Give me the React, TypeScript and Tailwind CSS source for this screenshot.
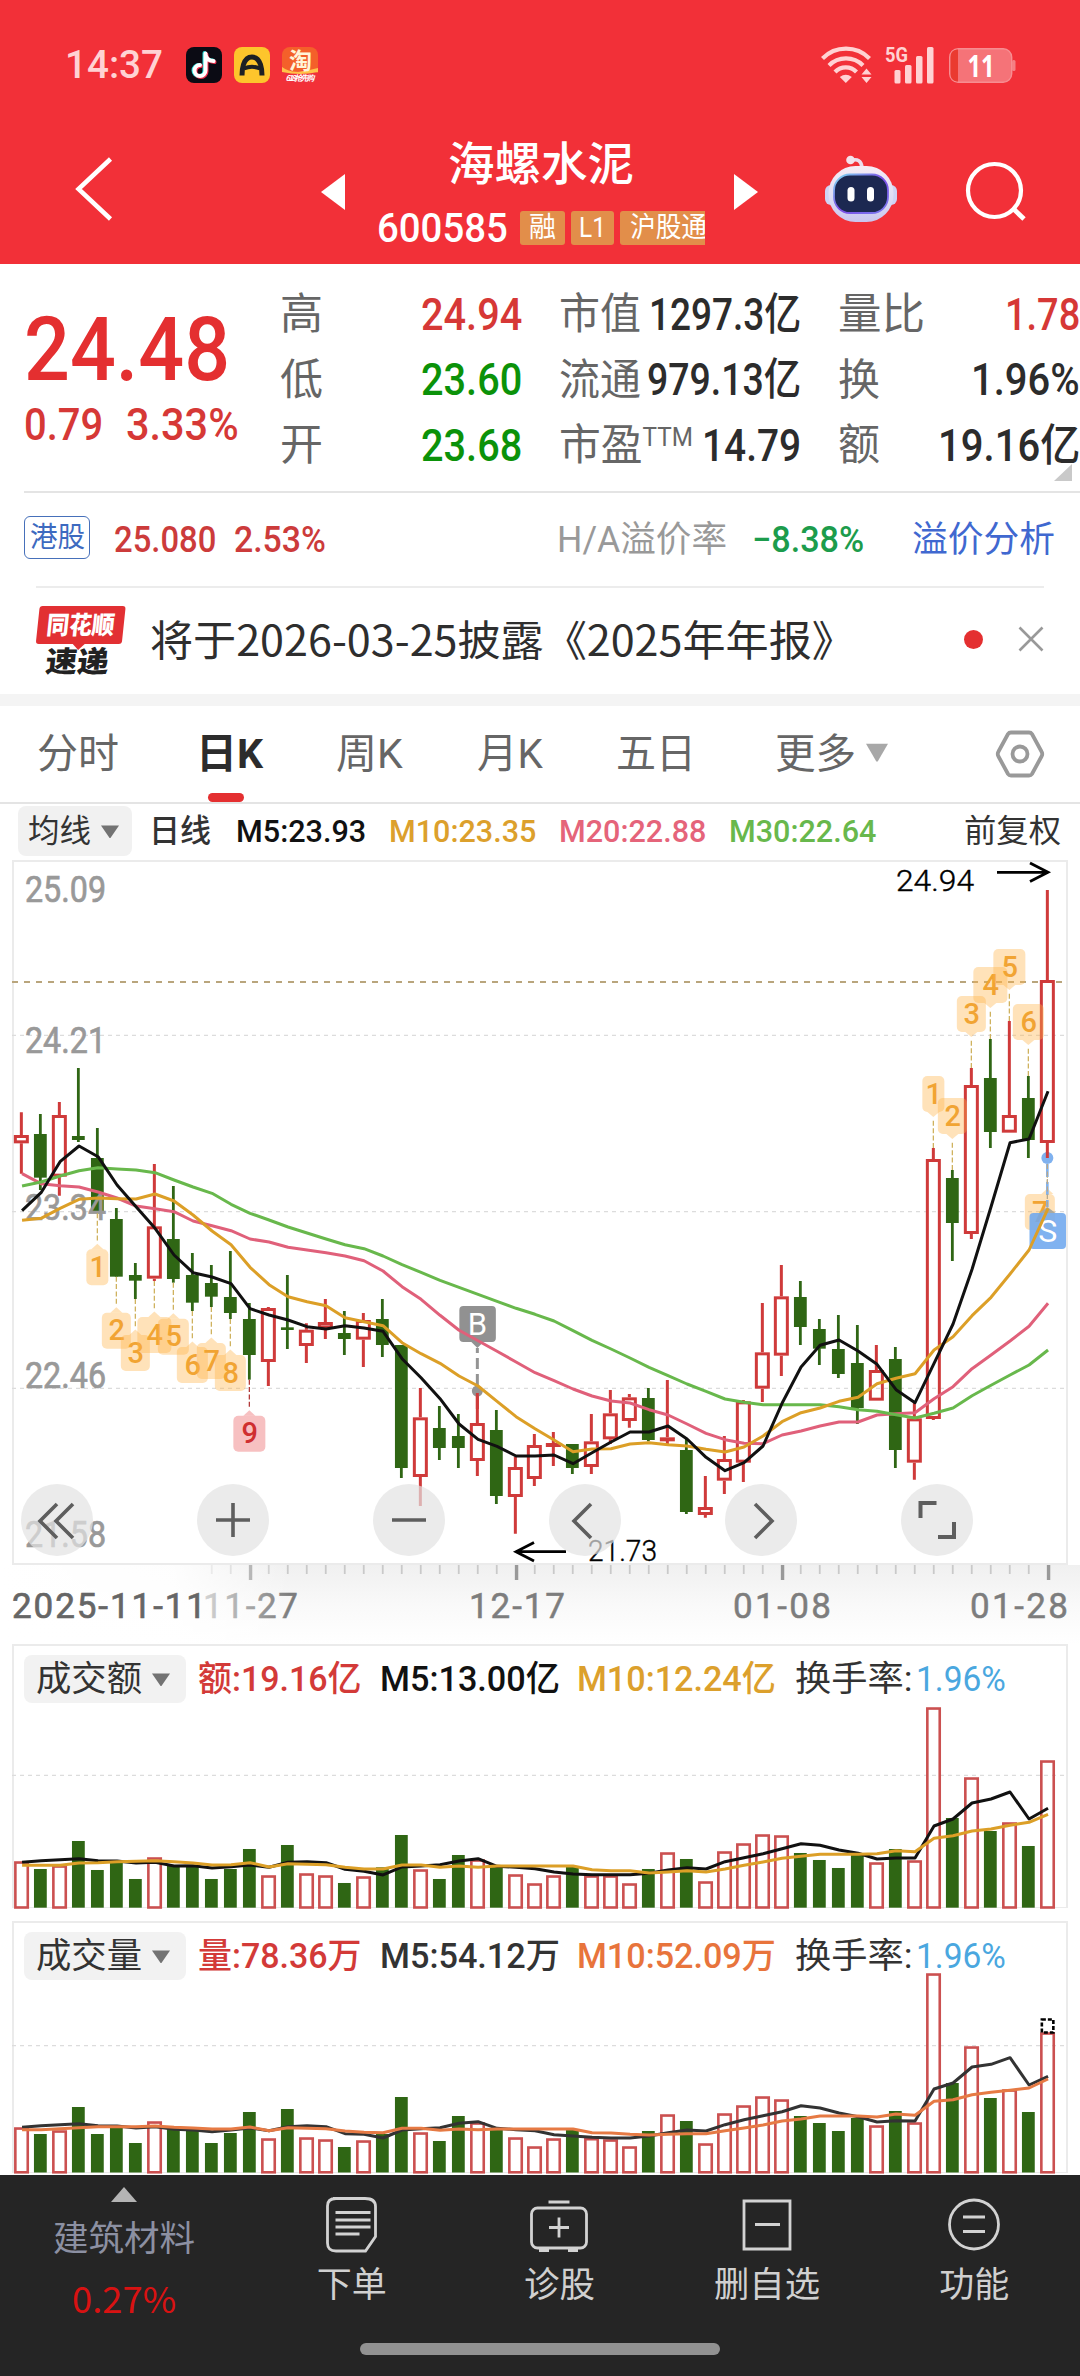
import { useLayoutEffect, useRef, useState, type ReactNode } from "react";

/** Single-line text condensed or widened horizontally to fill the width of its box. */
function Fit({ className, children }: { className: string; children: ReactNode }) {
  const box = useRef<HTMLDivElement>(null);
  const text = useRef<HTMLSpanElement>(null);
  const [scale, setScale] = useState(1);
  useLayoutEffect(() => {
    if (box.current && text.current) {
      setScale(box.current.clientWidth / text.current.offsetWidth);
    }
  }, [children]);
  return (
    <div ref={box} className={`flex shrink-0 leading-none whitespace-nowrap ${className}`}>
      <span ref={text} className="inline-block shrink-0 origin-left" style={{ transform: `scaleX(${scale})` }}>
        {children}
      </span>
    </div>
  );
}

const RED = "#cf3a3a";
const GREEN = "#2f6614";
const STEP = 19;
const X0 = 9.35;

/** Candles as [rising, high, body top, body bottom, low], three units to a pixel from the panel's top. */
const CANDLES: [number, number, number, number, number][] = [
  [1, 757, 825, 850, 941], [0, 762, 822, 953, 990], [1, 726, 765, 950, 1007], [0, 624, 828, 840, 846],
  [0, 804, 894, 1055, 1060], [0, 1044, 1077, 1250, 1250], [0, 1209, 1245, 1262, 1317], [1, 912, 1099, 1256, 1263],
  [0, 978, 1137, 1257, 1268], [0, 1179, 1245, 1328, 1353], [0, 1215, 1269, 1310, 1341], [0, 1173, 1311, 1359, 1377],
  [0, 1329, 1377, 1485, 1559], [1, 1341, 1344, 1506, 1578], [0, 1245, 1402, 1410, 1467], [1, 1390, 1409, 1458, 1509],
  [1, 1317, 1386, 1405, 1437], [0, 1353, 1419, 1437, 1485], [1, 1359, 1380, 1439, 1521], [0, 1317, 1377, 1455, 1491],
  [0, 1455, 1455, 1824, 1854], [1, 1584, 1672, 1851, 1938], [0, 1638, 1704, 1764, 1800], [0, 1662, 1728, 1764, 1824],
  [1, 1596, 1689, 1803, 1848], [0, 1650, 1710, 1908, 1932], [1, 1790, 1821, 1911, 2021], [1, 1722, 1755, 1857, 1878],
  [1, 1716, 1749, 1761, 1818], [0, 1752, 1752, 1824, 1842], [1, 1662, 1744, 1821, 1842], [1, 1590, 1660, 1738, 1752],
  [1, 1602, 1612, 1683, 1703], [0, 1584, 1614, 1740, 1744], [1, 1560, 1732, 1743, 1752], [0, 1737, 1770, 1956, 1962],
  [1, 1848, 1941, 1965, 1973], [1, 1728, 1797, 1862, 1902], [1, 1620, 1624, 1808, 1866], [1, 1329, 1477, 1586, 1626],
  [1, 1215, 1309, 1487, 1548], [0, 1263, 1311, 1401, 1455], [0, 1377, 1407, 1466, 1515], [0, 1365, 1467, 1542, 1554],
  [0, 1395, 1509, 1644, 1692], [1, 1455, 1530, 1622, 1622], [0, 1461, 1497, 1770, 1824], [1, 1624, 1675, 1808, 1859],
  [1, 864, 897, 1677, 1680], [0, 930, 954, 1089, 1203], [1, 624, 675, 1122, 1137], [0, 537, 654, 816, 864],
  [1, 483, 765, 818, 818], [0, 648, 714, 840, 894], [1, 90, 360, 849, 894],
];

const MA5 = [1052, 998, 905, 858, 890, 975, 1040, 1105, 1185, 1238, 1251, 1271, 1346, 1365, 1380, 1400, 1407, 1397, 1404, 1414, 1496, 1553, 1616, 1692, 1738, 1759, 1788, 1788, 1785, 1811, 1778, 1746, 1716, 1716, 1698, 1737, 1792, 1832, 1808, 1758, 1630, 1521, 1456, 1440, 1473, 1513, 1589, 1628, 1510, 1392, 1228, 1040, 848, 837, 694];
const MA10 = [1081, 1075, 1045, 1018, 1014, 1016, 1017, 1002, 1023, 1065, 1113, 1154, 1222, 1274, 1310, 1325, 1337, 1373, 1385, 1397, 1448, 1481, 1510, 1548, 1578, 1624, 1670, 1706, 1740, 1775, 1767, 1766, 1752, 1748, 1754, 1758, 1768, 1776, 1761, 1728, 1685, 1658, 1644, 1624, 1612, 1571, 1555, 1541, 1470, 1430, 1367, 1312, 1242, 1170, 1045];
const MA20 = [941, 971, 977, 981, 996, 1014, 1038, 1046, 1055, 1083, 1097, 1112, 1137, 1146, 1162, 1170, 1178, 1188, 1202, 1233, 1280, 1318, 1366, 1411, 1442, 1474, 1506, 1538, 1562, 1587, 1608, 1623, 1629, 1649, 1665, 1692, 1720, 1739, 1750, 1751, 1725, 1713, 1698, 1686, 1686, 1665, 1661, 1658, 1616, 1580, 1526, 1485, 1443, 1399, 1330];
const MA30 = [978, 966, 948, 932, 923, 927, 930, 938, 960, 981, 1000, 1033, 1060, 1080, 1101, 1119, 1137, 1154, 1166, 1188, 1214, 1237, 1261, 1282, 1303, 1324, 1345, 1363, 1383, 1412, 1441, 1467, 1494, 1522, 1547, 1572, 1594, 1617, 1627, 1634, 1634, 1634, 1634, 1640, 1649, 1654, 1664, 1674, 1660, 1644, 1607, 1576, 1545, 1515, 1470];

/** Bar tops and averages of the turnover and volume panels, three units to a pixel. */
const AMOUNT = [664, 687, 676, 603, 690, 668, 717, 652, 675, 675, 717, 687, 627, 706, 615, 700, 706, 729, 709, 682, 585, 688, 717, 645, 658, 681, 703, 730, 706, 681, 706, 706, 730, 687, 637, 657, 724, 634, 610, 583, 586, 639, 660, 684, 645, 667, 627, 661, 202, 534, 412, 573, 547, 618, 361];
const AMOUNT5 = [667, 662, 659, 656, 662, 663, 669, 667, 678, 677, 684, 680, 675, 682, 667, 665, 668, 688, 694, 705, 681, 678, 674, 663, 656, 679, 682, 686, 696, 702, 704, 704, 704, 700, 690, 683, 687, 665, 653, 641, 626, 611, 616, 630, 640, 657, 654, 654, 558, 537, 489, 477, 456, 537, 505];
const AMOUNT10 = [676, 676, 676, 669, 668, 665, 664, 662, 665, 669, 675, 674, 668, 681, 671, 673, 674, 682, 687, 687, 675, 675, 682, 678, 682, 678, 678, 678, 678, 678, 689, 692, 692, 699, 696, 692, 696, 687, 676, 666, 655, 649, 643, 643, 643, 641, 632, 635, 595, 587, 573, 567, 556, 547, 523];
const VOLUME = [652, 672, 661, 591, 672, 648, 699, 634, 657, 660, 699, 669, 606, 685, 597, 682, 688, 711, 691, 672, 561, 667, 693, 618, 637, 657, 682, 709, 685, 657, 684, 688, 709, 663, 613, 633, 700, 610, 586, 559, 568, 618, 639, 663, 624, 646, 603, 637, 190, 519, 409, 564, 538, 606, 367];
const VOLUME5 = [652, 647, 644, 641, 647, 648, 654, 650, 658, 660, 665, 660, 654, 662, 650, 647, 650, 671, 673, 684, 660, 656, 653, 640, 635, 655, 659, 662, 674, 678, 682, 684, 684, 678, 668, 660, 663, 644, 629, 617, 605, 587, 594, 609, 620, 636, 632, 633, 537, 519, 471, 463, 443, 525, 499];
const VOLUME10 = [659, 659, 656, 653, 650, 650, 650, 648, 652, 654, 657, 657, 651, 662, 653, 655, 656, 663, 667, 668, 655, 655, 661, 657, 659, 657, 657, 657, 657, 657, 668, 669, 673, 675, 673, 671, 671, 662, 654, 645, 633, 627, 618, 618, 618, 621, 612, 616, 574, 569, 554, 547, 541, 534, 507];

const px = (i: number) => X0 + i * STEP;
const linePoints = (values: number[], shift = 0) =>
  values.map((v, i) => `${px(i) + 0.7},${(v / 3 - shift).toFixed(1)}`).join(" ");

function Line({ values, color, shift = 0, width = 3 }: { values: number[]; color: string; shift?: number; width?: number }) {
  return <polyline points={linePoints(values, shift)} fill="none" stroke={color} strokeWidth={width} strokeLinejoin="round" />;
}

/** Count badges: [candle, label, badge width, above the candle]. */
const BADGES: [number, string, number, boolean][] = [
  [4, "1", 22, false], [5, "2", 29, false], [6, "3", 29, false], [7, "4", 34, false], [8, "5", 31, false],
  [9, "6", 31, false], [10, "7", 29, false], [11, "8", 31, false], [12, "9", 32, false],
  [48, "1", 22, true], [49, "2", 29, true], [50, "3", 29, true], [51, "4", 34, true], [52, "5", 32, true],
  [53, "6", 31, true], [54, "7", 30, false],
];

function Badge({ i, label, w, above }: { i: number; label: string; w: number; above: boolean }) {
  const c = CANDLES[i];
  const x = px(i);
  const bx = i === 54 ? x - 7.5 : x;
  const edge = (above ? c[1] : c[4]) / 3;
  const top = above ? edge - 72 : edge + 36;
  const nine = label === "9";
  const fill = nine ? "#f08c8e" : "#ffb347";
  const ink = nine ? "#cf2f30" : "#f1a433";
  return (
    <g>
      <line x1={x} x2={x} y1={edge} y2={above ? edge - 29 : edge + 29} stroke={nine ? "#b23a3a" : "#cfb25f"} strokeWidth="1.3" strokeDasharray="5 2.4" />
      <g fill={fill} fillOpacity={nine ? 0.55 : 0.38}>
        <rect x={bx - w / 2} y={top} width={w} height="36" rx="5" />
        <path d={above ? `M${x - 6} ${top + 36}h12l-6 5z` : `M${x - 6} ${top}h12l-6 -5.5z`} />
      </g>
      <text x={bx + 0.5} y={top + 27.5} textAnchor="middle" fontFamily="Roboto" fontWeight="500" fontSize="29" fill={ink}>{label}</text>
    </g>
  );
}

function CandleChart() {
  const dash = (y: number) => (
    <line key={y} x1="0" x2="1056" y1={y} y2={y} stroke="#dcdcdc" strokeWidth="1.3" strokeDasharray="4 4" />
  );
  const labels: [string, number][] = [["25.09", 42], ["24.21", 192.7], ["23.34", 360], ["22.46", 528], ["21.58", 686.7]];
  return (
    <svg width="1056" height="703" viewBox="0 0 1056 703" className="block">
      {[175.3, 351.7, 528.3].map(dash)}
      <line x1="0" x2="1050" y1="122" y2="122" stroke="#b9a57c" strokeWidth="2" strokeDasharray="6 6" />
      {CANDLES.map(([up, h, t, b, l], i) => {
        const x = px(i);
        return up ? (
          <g key={i} stroke={RED} strokeWidth="3" fill="none">
            <path d={`M${x} ${h / 3}V${t / 3}M${x} ${b / 3}V${l / 3}`} />
            <rect x={x - 6} y={t / 3 + 1.5} width="12" height={Math.max(b / 3 - t / 3 - 3, 1)} />
          </g>
        ) : (
          <g key={i} fill={GREEN}>
            <rect x={x - 1.4} y={h / 3} width="2.8" height={(l - h) / 3} />
            <rect x={x - 6.4} y={t / 3} width="12.8" height={(b - t) / 3} />
          </g>
        );
      })}
      {labels.map(([s, y]) => (
        <text key={s} x="13" y={y} fontFamily="Roboto" fontSize="36" fill="#999" stroke="#999" strokeWidth=".7" textLength="81" lengthAdjust="spacingAndGlyphs">{s}</text>
      ))}
      {BADGES.map(([i, s, w, above]) => <Badge key={i} i={i} label={s} w={w} above={above} />)}
      <g>
        <circle cx={px(24)} cy="531" r="5.5" fill="#949494" />
        <path d={`M${px(24)} 525V488`} stroke="#949494" strokeWidth="3" strokeDasharray="11 5" />
        <rect x={px(24) - 18} y="446" width="36.5" height="36" rx="4" fill="#919191" />
        <path d={`M${px(24) - 6} 482h12l-6 6z`} fill="#919191" />
        <text x={px(24)} y="474.5" textAnchor="middle" fontFamily="Roboto" fontSize="31" fill="#fff">B</text>
        <path d={`M${px(24)} 533V549`} stroke={RED} strokeWidth="3" />
      </g>
      <g>
        <circle cx={px(54)} cy="298" r="6" fill="#7fb1ef" />
        <path d={`M${px(54)} 292V298`} stroke={RED} strokeWidth="3" />
        <path d={`M${px(54)} 304V347`} stroke="#7fb1ef" strokeWidth="2.6" strokeDasharray="13 5" />
        <path d={`M${px(54)} 304V347`} stroke="#b9a88a" strokeWidth="1.3" strokeDasharray="5 2.5" />
        <rect x="1017.5" y="353" width="36.5" height="36" rx="4" fill="#6ea7ee" fillOpacity=".88" />
        <path d={`M${px(54) - 8} 353h16l-8 -6z`} fill="#a9a9a0" />
        <text x={px(54) + 0.5} y="382" textAnchor="middle" fontFamily="Roboto" fontSize="32" fill="#fff">S</text>
      </g>
      <Line values={MA20} color="#e0607a" />
      <Line values={MA30} color="#68b84c" />
      <Line values={MA10} color="#dc9f27" />
      <Line values={MA5} color="#111" />
      <g fontFamily="Roboto" fontWeight="300" fontSize="30" fill="#000" stroke="#000" strokeWidth=".4">
        <text x="884" y="30.5" textLength="78" lengthAdjust="spacingAndGlyphs">24.94</text>
        <text x="576" y="701" textLength="69" lengthAdjust="spacingAndGlyphs">21.73</text>
      </g>
      <path d="M985 12.3h50M1018 3l18 9.3-18 9.3M504 691.7h50M522 682.4l-18 9.3 18 9.3" fill="none" stroke="#000" strokeWidth="2.8" />
    </svg>
  );
}

function BarChart({ tops, short, long, base, colors, mid, shift, estimate }: {
  tops: number[]; short: number[]; long: number[]; base: number; colors: [string, string]; mid: number; shift: number; estimate?: boolean;
}) {
  return (
    <svg width="1056" height={base} viewBox={`0 0 1056 ${base}`} className="absolute top-0 left-0 block overflow-visible">
      <line x1="0" x2="1056" y1={mid} y2={mid} stroke="#dcdcdc" strokeWidth="1.3" strokeDasharray="4 4" />
      {tops.map((v, i) => {
        const y = v / 3 - shift;
        return CANDLES[i][0] ? (
          <rect key={i} x={px(i) - 6} y={y + 1.2} width="12.4" height={base - y - 1.4} fill="none" stroke="#cb5050" strokeWidth="2.6" />
        ) : (
          <rect key={i} x={px(i) - 6.4} y={y} width="12.8" height={base - y} fill={GREEN} />
        );
      })}
      {estimate && (
        <rect x={px(54) - 5.5} y="98.5" width="11.5" height="13" fill="none" stroke="#000" strokeWidth="2.6" strokeDasharray="4 2" />
      )}
      <Line values={short} color={colors[0]} shift={shift} />
      <Line values={long} color={colors[1]} shift={shift} />
    </svg>
  );
}

function Down({ className }: { className: string }) {
  return (
    <svg viewBox="0 0 18 13" preserveAspectRatio="none" className={`shrink-0 fill-current ${className}`}>
      <path d="M0 .5h18L9.8 12.4q-.8 1-1.6 0z" />
    </svg>
  );
}

function Metric({ label, value, w, lw, color }: { label: ReactNode; value: string; w: string; lw: string; color: string }) {
  return (
    <div className="flex h-[65.5px] items-center justify-between">
      <Fit className={`text-[43px] text-[#666] ${lw}`}>{label}</Fit>
      <Fit className={`text-[44px] font-medium ${w} ${color}`}>{value}</Fit>
    </div>
  );
}

function PanelHead({ name, a, b, c, bColor, cColor }: { name: string; a: string; b: string; c: string; bColor: string; cColor: string }) {
  return (
    <div className="relative z-10 flex h-12 items-center pl-2.5 text-[35px] font-medium">
      <div className="flex h-12 w-[162px] items-center rounded-lg bg-[#f2f2f2] pl-3 font-normal text-[#333]">
        <Fit className="w-[106px]">{name}</Fit>
        <Down className="ml-2.5 h-[13px] w-[18px] text-[#737373]" />
      </div>
      <Fit className="ml-3 w-[164px] text-[#d33a38]">{a}</Fit>
      <Fit className={`ml-[18px] w-[180px] ${bColor}`}>{b}</Fit>
      <Fit className={`ml-[17px] w-[199px] ${cColor}`}>{c}</Fit>
      <Fit className="ml-[19px] w-[117px] font-normal text-[#333]">换手率:</Fit>
      <Fit className="ml-1 w-[90px] font-normal text-[#4aa7df]">1.96%</Fit>
    </div>
  );
}

function StatusBar() {
  return (
    <div className="flex h-[130px] items-center pl-[65px]">
      <Fit className="w-[98px] text-[39px] font-medium text-[#ffd2d3]">14:37</Fit>
      <svg width="36" height="36" viewBox="0 0 36 36" className="ml-[23px]">
        <rect width="36" height="36" rx="8" fill="#0b0b14" />
        <g fill="none" strokeWidth="4" strokeLinecap="round">
          <path d="M18.5 6v17.5a5.5 5.5 0 1 1-5.500-5.500M18.500 7q1 6 8 6.500" stroke="#25e0dc" />
          <path d="M20.500 7.500v17a5.500 5.500 0 1 1-5.500-5.500M20.500 8.500q1 6 8 6.500" stroke="#f2304f" />
          <path d="M19.500 6.500v17a5.500 5.500 0 1 1-5.500-5.500M19.500 7.500q1 6 8 6.500" stroke="#fff" />
        </g>
      </svg>
      <svg width="36" height="36" viewBox="0 0 36 36" className="ml-3">
        <rect width="36" height="36" rx="8" fill="#fdc52c" />
        <path d="M8 28.500Q8 22 9.500 17.500Q12 10 18 10T26.500 17.500Q28 22 28 28.500" fill="none" stroke="#1d2024" strokeWidth="5" />
        <path d="M10 21.500q8-3.500 16 0" fill="none" stroke="#1d2024" strokeWidth="4" />
      </svg>
      <svg width="36" height="36" viewBox="0 0 36 36" className="ml-3">
        <rect width="36" height="36" rx="8" fill="#f4602a" />
        <path d="M0 22q9 5 18 2t18 2v2q0 8-8 8H8q-8 0-8-8z" fill="#f0303c" />
        <path d="M0 20q8 6 18 4.500T36 21v4q-9 2-18 2T0 25z" fill="#ffc24a" />
        <text x="18.500" y="22" textAnchor="middle" fontFamily="Noto Sans CJK SC" fontWeight="700" fontSize="23" fill="#fff4d8">淘</text>
        <text x="18" y="34" textAnchor="middle" fontFamily="Noto Sans CJK SC" fontWeight="700" fontStyle="italic" fontSize="8" fill="#fff" textLength="29">618抢先购</text>
      </svg>
      <svg width="52" height="38" viewBox="0 0 52 38" className="ml-[503px]" fill="none" stroke="#ffd2d3" strokeWidth="4.200">
        <path d="M1.500 12.500a33 33 0 0 1 47 0M8 19.500a24 24 0 0 1 34 0M14 26a15 15 0 0 1 21.500 0" />
        <path d="M24.800 37l-6-6q6-4.500 12 0z" fill="#ffd2d3" stroke="none" />
        <path d="M45.500 22.500l5 6h-10zM45.500 37l5-6h-10z" fill="#ffd2d3" stroke="none" />
      </svg>
      <svg width="50" height="38" viewBox="0 0 50 38" className="ml-[12px] overflow-visible">
        <text x="0" y="16" fontFamily="Roboto" fontWeight="700" fontSize="21" fill="#ffd2d3" textLength="23" lengthAdjust="spacingAndGlyphs">5G</text>
        <g fill="#ffd2d3">
          <rect x="9.500" y="24" width="6" height="13.500" rx="1.500" />
          <rect x="20" y="19" width="6.500" height="18.500" rx="1.500" />
          <rect x="31" y="10" width="6.500" height="27.500" rx="1.500" />
          <rect x="42" y="1" width="6.500" height="36.500" rx="1.500" />
        </g>
      </svg>
      <svg width="67" height="35" viewBox="0 0 67 35" className="ml-[14px] overflow-visible">
        <rect x=".7" y=".7" width="62" height="33.500" rx="8.500" fill="#f57378" stroke="#f78d91" strokeWidth="1.400" />
        <path d="M9 1.500H8Q1.500 2 1.500 9v17q0 6.500 6.500 7.500h1z" fill="#ea3a30" />
        <rect x="63" y="12" width="3.500" height="11" rx="1.500" fill="#f57f84" />
        <text x="32" y="28.500" textAnchor="middle" fontFamily="Open Sans" fontWeight="700" fontSize="30" fill="#fff" textLength="27" lengthAdjust="spacingAndGlyphs">11</text>
      </svg>
    </div>
  );
}

function Robot() {
  return (
    <svg width="74" height="68" viewBox="0 0 74 68" className="-mt-4 ml-[66px]">
      <defs>
        <linearGradient id="shell" x1="0" y1="0" x2="0" y2="1">
          <stop offset="0" stopColor="#f6ecf5" />
          <stop offset=".6" stopColor="#dcdcf4" />
          <stop offset="1" stopColor="#c9c5ef" />
        </linearGradient>
        <linearGradient id="rim" x1="0" y1="0" x2="1" y2="1">
          <stop offset="0" stopColor="#7fe0f2" />
          <stop offset=".5" stopColor="#7b4be6" />
          <stop offset="1" stopColor="#7a7cf0" />
        </linearGradient>
      </defs>
      <path d="M27 5.500q10-3 11 7" fill="none" stroke="#ecdcec" strokeWidth="3.500" />
      <circle cx="26.500" cy="5" r="4.300" fill="#f3e2ec" />
      <rect x="1" y="30" width="12" height="20" rx="6" fill="#cfd3f4" />
      <rect x="61" y="30" width="12" height="20" rx="6" fill="#cfd3f4" />
      <rect x="4.500" y="11" width="65" height="56" rx="27" fill="url(#shell)" />
      <rect x="10" y="19.500" width="54" height="38.500" rx="16" fill="#1c2851" stroke="url(#rim)" strokeWidth="1.800" />
      <rect x="23.500" y="32" width="7" height="14.500" rx="3.500" fill="#fff" />
      <rect x="43" y="32" width="7" height="14.500" rx="3.500" fill="#fff" />
    </svg>
  );
}

function TitleBar() {
  return (
    <div className="flex h-[134px] items-center">
      <svg width="40" height="66" viewBox="0 0 40 66" className="-mt-4 ml-[74px]" fill="none" stroke="#fff" strokeWidth="4.500">
        <path d="M36.500 3L4.500 33l32 30" />
      </svg>
      <svg width="24" height="36" viewBox="0 0 24 36" className="-mt-2.5 ml-[207px] fill-white"><path d="M24 0v36L0 18z" /></svg>
      <div className="ml-[31px] flex h-full w-[329px] flex-col items-center overflow-hidden">
        <Fit className="mt-[11px] w-[186px] text-[46px] font-medium text-white">海螺水泥</Fit>
        <div className="mt-[23px] ml-px flex h-9 w-full items-center text-[28px] text-white">
          <Fit className="w-[131px] text-[41px] font-medium">600585</Fit>
          <div className="ml-3 flex h-[34px] w-[45px] shrink-0 items-center justify-center rounded-[3px] bg-[#e28e4a]"><Fit className="w-[27px]">融</Fit></div>
          <div className="ml-1.5 flex h-[34px] w-[43px] shrink-0 items-center justify-center rounded-[3px] bg-[#e28e4a]"><Fit className="w-[27px]">L1</Fit></div>
          <div className="ml-1.5 flex h-[34px] w-[100px] shrink-0 items-center rounded-[3px] bg-[#e28e4a] pl-2.5"><Fit className="w-[77px]">沪股通</Fit></div>
        </div>
      </div>
      <svg width="24" height="36" viewBox="0 0 24 36" className="-mt-2.5 ml-[29px] fill-white"><path d="M0 0v36l24-18z" /></svg>
      <Robot />
      <svg width="64" height="62" viewBox="0 0 64 62" className="-mt-3 ml-[66px]" fill="none" stroke="#fff" strokeWidth="4.200">
        <circle cx="30.500" cy="30.500" r="26.500" />
        <path d="M48.500 48l11.500 11" strokeWidth="4.800" />
      </svg>
    </div>
  );
}

function Quote() {
  return (
    <section className="flex h-[227px] overflow-hidden">
      <div className="w-[280px] pl-6">
        <Fit className="mt-[41px] w-[206px] text-[89px] font-medium text-[#e42f30]">24.48</Fit>
        <div className="mt-[9px] flex text-[44px] font-medium text-[#d63836]">
          <Fit className="w-[79px]">0.79</Fit>
          <Fit className="ml-[23px] w-[113px]">3.33%</Fit>
        </div>
      </div>
      <div className="w-[242px] pt-[18px]">
        <Metric label="高" value="24.94" lw="w-[43px]" w="w-[101px]" color="text-[#d63836]" />
        <Metric label="低" value="23.60" lw="w-[43px]" w="w-[101px]" color="text-[#0b9209]" />
        <Metric label="开" value="23.68" lw="w-[43px]" w="w-[101px]" color="text-[#0b9209]" />
      </div>
      <div className="ml-[37px] w-[242px] pt-[18px]">
        <Metric label="市值" value="1297.3亿" lw="w-[82px]" w="w-[152px]" color="text-[#2c2c2c]" />
        <Metric label="流通" value="979.13亿" lw="w-[82px]" w="w-[154px]" color="text-[#2c2c2c]" />
        <Metric label={<>市盈<span className="inline-block -translate-y-3.5 text-[25px]">TTM</span></>} value="14.79" lw="w-[134px]" w="w-[99px]" color="text-[#2c2c2c]" />
      </div>
      <div className="relative ml-[37px] w-[242px] pt-[18px]">
        <Metric label="量比" value="1.78" lw="w-[87px]" w="w-[75px]" color="text-[#d63836]" />
        <Metric label="换" value="1.96%" lw="w-[42px]" w="w-[109px]" color="text-[#2c2c2c]" />
        <Metric label="额" value="19.16亿" lw="w-[42px]" w="w-[142px]" color="text-[#2c2c2c]" />
        <svg width="18" height="17" viewBox="0 0 18 17" className="absolute right-2 bottom-2.5 fill-[#c9c9c9]"><path d="M18 0v17H0z" /></svg>
      </div>
    </section>
  );
}

function Tabs() {
  return (
    <nav className="flex h-[98px] items-center border-b-2 border-[#e4e4e4] bg-white text-[41px] text-[#666]">
      <Fit className="ml-[37px] w-[82px]">分时</Fit>
      <div className="relative ml-[77px] flex h-full items-center">
        <Fit className="w-[67px] font-bold text-[#2c2c2c]">日K</Fit>
        <div className="absolute bottom-0 left-3 h-[9px] w-9 rounded-full bg-[#e42f30]" />
      </div>
      <Fit className="ml-[73px] w-[67px]">周K</Fit>
      <Fit className="ml-[74px] w-[66px]">月K</Fit>
      <Fit className="ml-[73px] w-[80px]">五日</Fit>
      <Fit className="ml-[79px] w-[81px]">更多</Fit>
      <Down className="-mt-1 ml-2.5 h-[19px] w-[22px] text-[#a8a8a8]" />
      <svg width="50" height="48" viewBox="0 0 50 48" className="ml-[107px]" fill="none" stroke="#999" strokeWidth="3.800">
        <path d="M16 2.500h18q2 0 3 1.500l9.500 17.500q1.500 2.500 0 5L37 44q-1 1.500-3 1.500H16q-2 0-3-1.500L3.500 26.500q-1.500-2.500 0-5L13 4q1-1.500 3-1.500z" />
        <circle cx="25" cy="24" r="7.500" />
      </svg>
    </nav>
  );
}

function RoundButton({ children }: { children: ReactNode }) {
  return (
    <div className="flex h-[72px] w-[72px] items-center justify-center rounded-full bg-[#e3e3e3]/70">
      <svg width="40" height="40" viewBox="-20 -20 40 40" fill="none" stroke="#5e5e5e" strokeWidth="3.600">{children}</svg>
    </div>
  );
}

function TimeAxis() {
  const ticks = Array.from({ length: 45 }, (_, k) => k + 10);
  return (
    <div className="h-[79px] bg-gradient-to-b from-[#f0f0f0] via-[#f9f9f9] to-white">
      <svg width="1068" height="79" viewBox="0 0 1068 79" className="block">
        <defs>
          <linearGradient id="fade">
            <stop offset="0" stopColor="#fff" />
            <stop offset=".6" stopColor="#fff" stopOpacity=".9" />
            <stop offset="1" stopColor="#fff" stopOpacity="0" />
          </linearGradient>
        </defs>
        {ticks.map((i) => {
          const major = i === 12 || i === 26 || i === 40 || i === 54;
          return <rect key={i} x={px(i) + 11.500} y="0" width={major ? 3.400 : 1.800} height={major ? 15 : 9} fill={major ? "#999" : "#c9c9c9"} />;
        })}
        <g fontFamily="Roboto" fontSize="35" fill="#7d7d7d" stroke="#7d7d7d" strokeWidth=".5">
          <text x="203" y="53" textLength="95">11-27</text>
          <text x="469" y="53" textLength="96">12-17</text>
          <text x="733" y="53" textLength="98">01-08</text>
          <text x="970" y="53" textLength="98">01-28</text>
        </g>
        <rect x="0" y="0" width="290" height="79" fill="url(#fade)" />
        <text x="12" y="53" fontFamily="Roboto" fontSize="35" fill="#666" stroke="#666" strokeWidth=".7" textLength="194">2025-11-11</text>
      </svg>
    </div>
  );
}

function NavItem({ label, w, icon }: { label: string; w: string; icon: ReactNode }) {
  return (
    <div className="flex w-[207.500px] flex-col items-center pt-[21px]">
      <svg width="60" height="58" viewBox="0 0 60 58" fill="none" stroke="#d2d2d2" strokeWidth="2.800">{icon}</svg>
      <Fit className={`mt-3.5 text-[35px] text-[#d0d0d0] ${w}`}>{label}</Fit>
    </div>
  );
}

export default function App() {
  return (
    <div className="h-[2376px] w-[1080px] overflow-hidden bg-white font-[Roboto,'Noto_Sans_CJK_SC',sans-serif]">
      <header className="h-[264px] bg-[#f23038]">
        <StatusBar />
        <TitleBar />
      </header>

      <Quote />

      <section className="ml-6 flex h-[95px] items-center border-t-2 border-[#e4e4e4]">
        <div className="-mt-1 flex h-[43px] w-[66px] items-center justify-center rounded-md border-[1.5px] border-[#4670ba] text-[28px] text-[#3d6ac0]">
          <Fit className="w-[55px]">港股</Fit>
        </div>
        <Fit className="ml-6 w-[102px] text-[36px] font-medium text-[#cc3b3b]">25.080</Fit>
        <Fit className="ml-[18px] w-[92px] text-[36px] font-medium text-[#cc3b3b]">2.53%</Fit>
        <Fit className="ml-[231px] w-[170px] text-[36px] text-[#999]">H/A溢价率</Fit>
        <Fit className="ml-[25px] w-[112px] text-[36px] font-medium text-[#1c9c4c]">−8.38%</Fit>
        <Fit className="ml-[48px] w-[143px] text-[36px] text-[#4068d0]">溢价分析</Fit>
      </section>

      <section className="mx-9 flex h-[108px] items-center border-t-2 border-[#ececec]">
        <div className="relative w-[90px] -skew-x-6">
          <div className="relative flex h-[38px] w-[86px] items-center justify-center rounded-[3px] bg-[#e23033]">
            <Fit className="w-[68px] text-[25px] font-black text-white">同花顺</Fit>
            <svg width="14" height="7" viewBox="0 0 14 7" className="absolute top-[37px] left-9 fill-[#e23033]"><path d="M0 0h14L7 7z" /></svg>
          </div>
          <Fit className="mt-1 ml-3 w-[63px] text-[29px] font-black text-[#222]">速递</Fit>
        </div>
        <Fit className="-mt-1.5 ml-6 w-[705px] font-['Noto_Sans_CJK_SC',sans-serif] text-[42px] text-[#2e2e2e]">将于2026-03-25披露《2025年年报》</Fit>
        <div className="-mt-1 ml-auto h-[19px] w-[19px] shrink-0 rounded-full bg-[#e42f30]" />
        <svg width="26" height="26" viewBox="0 0 26 26" className="-mt-1 ml-[35px] shrink-0 stroke-[#999]" strokeWidth="2.600"><path d="M1.500 1.500l23 23M24.500 1.500l-23 23" /></svg>
      </section>

      <div className="h-3 bg-[#f4f4f4]" />
      <Tabs />

      <section className="flex h-[56px] items-start pt-0.5 text-[32px]">
        <div className="ml-[18px] flex h-[50px] w-[114px] items-center rounded-lg bg-[#f1f1f1] pl-2.5 text-[#333]">
          <Fit className="w-[63px]">均线</Fit>
          <Down className="ml-2.5 h-[13px] w-[18px] text-[#737373]" />
        </div>
        <div className="flex h-[50px] items-center font-medium">
          <Fit className="ml-[17px] w-[62px] text-[#333]">日线</Fit>
          <Fit className="ml-[25px] w-[130px] text-[#111]">M5:23.93</Fit>
          <Fit className="ml-[23px] w-[147px] text-[#dca02c]">M10:23.35</Fit>
          <Fit className="ml-[23px] w-[147px] text-[#e5647a]">M20:22.88</Fit>
          <Fit className="ml-[23px] w-[147px] text-[#68b84c]">M30:22.64</Fit>
          <Fit className="ml-[88px] w-[97px] font-normal text-[#333]">前复权</Fit>
        </div>
      </section>

      <section className="relative mx-3 h-[705px] border-2 border-[#ebebeb]">
        <div className="-mt-0.5 -ml-0.5 w-[1056px]">
          <CandleChart />
        </div>
        <div className="absolute bottom-[7px] left-[7px] flex gap-[104px]">
          <RoundButton><path d="M0-16l-17 17 17 17M16-16l-17 17 17 17" /></RoundButton>
          <RoundButton><path d="M-17 0h34M0-17v34" /></RoundButton>
          <RoundButton><path d="M-17 0h34" /></RoundButton>
          <RoundButton><path d="M6-16L-11 1 6 18" /></RoundButton>
          <RoundButton><path d="M-6-16L11 1-6 18" /></RoundButton>
          <RoundButton><path d="M-16.500-2v-15h16M17 2v15H1" strokeWidth="4" /></RoundButton>
        </div>
      </section>

      <TimeAxis />

      <section className="relative mx-3 h-[264px] border-2 border-b border-[#ebebeb] pt-[9px]">
        <PanelHead name="成交额" a="额:19.16亿" b="M5:13.00亿" c="M10:12.24亿" bColor="text-[#111]" cColor="text-[#dca02c]" />
        <div className="absolute -top-0.5 -left-0.5">
          <BarChart tops={AMOUNT} short={AMOUNT5} long={AMOUNT10} base={263.700} mid={131.300} shift={4} colors={["#111", "#dc9f27"]} />
        </div>
      </section>

      <section className="relative mx-3 mt-[13px] h-[252px] border-2 border-b border-[#ebebeb] pt-[9px]">
        <PanelHead name="成交量" a="量:78.36万" b="M5:54.12万" c="M10:52.09万" bColor="text-[#333]" cColor="text-[#e8743c]" />
        <div className="absolute -top-0.5 -left-0.5">
          <BarChart tops={VOLUME} short={VOLUME5} long={VOLUME10} base={251.500} mid={124.700} shift={11} colors={["#333", "#e67a44"]} estimate />
        </div>
      </section>

      <footer className="mt-0.5 h-[202px] bg-[#252525]">
        <div className="flex h-[168px]">
          <div className="flex w-[248px] flex-col items-center pt-3">
            <svg width="26" height="15" viewBox="0 0 26 15" className="fill-[#b4b4b4]"><path d="M0 15L13 0l13 15z" /></svg>
            <Fit className="mt-5 w-[142px] text-[35px] text-[#8c90a2]">建筑材料</Fit>
            <Fit className="mt-[22px] w-[104px] font-['Noto_Sans_CJK_SC',sans-serif] text-[36px] text-[#d81212]">0.27%</Fit>
          </div>
          <NavItem label="下单" w="w-[70px]" icon={
            <path d="M11 2.500h32q10.500 0 10.500 8v30L43.500 55H14q-8.500 0-8.500-8V10q0-7.500 8.500-7.500M13.500 16.500h35M13.500 24h35M13.500 31h35M13.500 38h24" />
          } />
          <NavItem label="诊股" w="w-[71px]" icon={
            <>
              <rect x="2.500" y="12" width="55" height="40" rx="6" />
              <path d="M19.500 6h21M30 21.500v20M20 31.500h20M10 54.500h10M39 54.500h10" />
            </>
          } />
          <NavItem label="删自选" w="w-[106px]" icon={<path d="M7 5h46v48H7zM18 28.500h25" />} />
          <NavItem label="功能" w="w-[70px]" icon={
            <>
              <circle cx="30" cy="28.500" r="24.500" />
              <path d="M19 21h22M19 35.500h22" />
            </>
          } />
        </div>
        <div className="mx-auto h-3 w-[360px] rounded-full bg-[#929292]" />
      </footer>
    </div>
  );
}
